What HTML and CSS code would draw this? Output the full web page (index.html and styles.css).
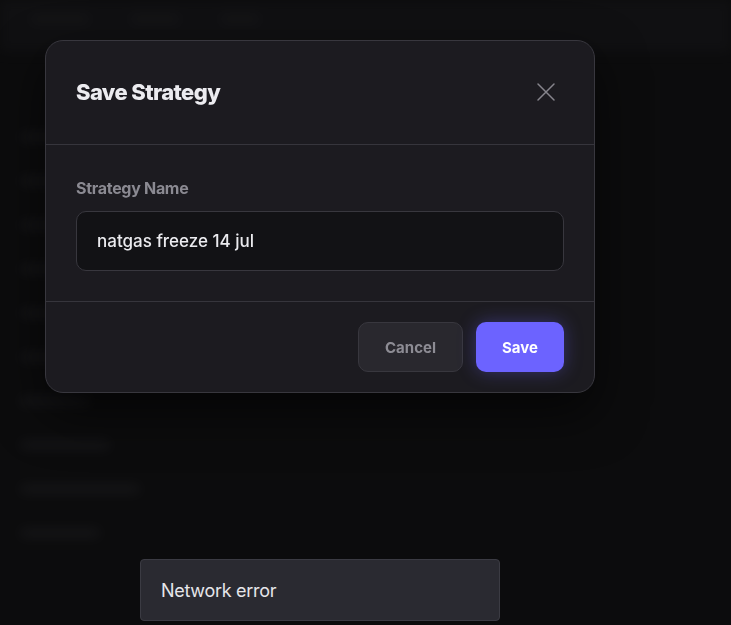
FILE: index.html
```html
<!DOCTYPE html>
<html lang="en">

<head>
  <meta charset="UTF-8">
  <title>Save Strategy</title>
  <link rel="stylesheet" href="styles.css">
</head>

<body>
  <!-- blurred page behind the modal -->
  <main class="page">
    <div class="topbar">
      <span class="blob w60"></span>
      <span class="blob w50"></span>
      <span class="blob w40"></span>
    </div>
    <div class="rows">
      <span class="blob w90"></span>
      <span class="blob w70"></span>
      <span class="blob w120"></span>
      <span class="blob w80"></span>
      <span class="blob w60"></span>
      <span class="blob w100"></span>
      <span class="blob w70"></span>
      <span class="blob w90"></span>
      <span class="blob w120"></span>
      <span class="blob w80"></span>
    </div>
  </main>

  <div class="overlay">
    <section class="modal">
      <header class="modal_head">
        <h2>Save Strategy</h2>
        <button class="close" aria-label="Close">
          <svg width="20" height="20" viewBox="0 0 20 20" fill="none" stroke="currentColor" stroke-width="1.5" stroke-linecap="round">
            <path d="M2 2 L18 18 M18 2 L2 18" />
          </svg>
        </button>
      </header>

      <div class="modal_body">
        <label class="label" for="name">Strategy Name</label>
        <input class="field" id="name" type="text" value="natgas freeze 14 jul">
      </div>

      <footer class="modal_foot">
        <button class="btn cancel">Cancel</button>
        <button class="btn save">Save</button>
      </footer>
    </section>
  </div>

  <div class="toast">Network error</div>
</body>

</html>
```

FILE: styles.css
```css
* {
  box-sizing: border-box;
  margin: 0;
  padding: 0;
}

body {
  background-color: #0c0c0d;
  font-family: Inter, "Noto Sans", sans-serif;
  color: #e8e8ec;
  height: 625px;
  overflow: hidden;
}

/* 뒤쪽 흐린 페이지 */
.page {
  filter: blur(6px);
  opacity: 0.3;
}

.page .topbar {
  display: flex;
  gap: 40px;
  padding: 14px 30px;
  height: 52px;
  background-color: #1a1a1e;
}

.page .rows {
  display: flex;
  flex-direction: column;
  gap: 34px;
  padding: 80px 20px;
}

.blob {
  display: block;
  height: 10px;
  border-radius: 4px;
  background-color: #2a2a2e;
}

.w40 { width: 40px; }
.w50 { width: 50px; }
.w60 { width: 60px; }
.w70 { width: 70px; }
.w80 { width: 80px; }
.w90 { width: 90px; }
.w100 { width: 100px; }
.w120 { width: 120px; }

.overlay {
  position: fixed;
  inset: 0;
  padding: 40px 0 0 45px;
}

.modal {
  width: 550px;
  background-color: #1c1b20;
  border: 1px solid #38373e;
  border-radius: 18px;
  box-shadow: 0 20px 50px rgba(0, 0, 0, 0.6);
}

.modal_head {
  display: flex;
  align-items: center;
  justify-content: space-between;
  height: 104px;
  padding: 0 38px 2px 30px;
  border-bottom: 1px solid #36353c;
}

.modal_head h2 {
  font-size: 22px;
  font-weight: 800;
  letter-spacing: -0.6px;
  color: #ececf0;
}

.close {
  display: flex;
  background: none;
  border: none;
  color: #86858c;
  cursor: pointer;
}

.modal_body {
  display: flex;
  flex-direction: column;
  gap: 13px;
  padding: 33px 30px 30px;
  border-bottom: 1px solid #36353c;
}

.label {
  font-size: 16px;
  font-weight: 700;
  letter-spacing: -0.3px;
  color: #8b8a92;
}

.field {
  height: 60px;
  padding: 0 20px;
  background-color: #121215;
  border: 1px solid #38373e;
  border-radius: 10px;
  font-family: inherit;
  font-size: 17px;
  font-weight: 500;
  color: #ebebef;
  outline: none;
}

.modal_foot {
  display: flex;
  justify-content: flex-end;
  gap: 13px;
  padding: 20px 30px 20px;
}

.btn {
  height: 50px;
  border-radius: 10px;
  font-family: inherit;
  font-size: 15px;
  font-weight: 700;
  cursor: pointer;
}

.cancel {
  width: 105px;
  background-color: #29282e;
  border: 1px solid #38373e;
  color: #8d8c94;
}

.save {
  width: 88px;
  background-color: #6c63ff;
  border: none;
  color: #ffffff;
  box-shadow: 0 0 18px rgba(108, 99, 255, 0.35);
}

.toast {
  position: fixed;
  left: 140px;
  top: 559px;
  width: 360px;
  height: 62px;
  display: flex;
  align-items: center;
  padding: 0 20px;
  background-color: #2a2a31;
  border: 1px solid #3b3b43;
  border-radius: 4px;
  font-size: 18px;
  letter-spacing: -0.3px;
  color: #e6e6ea;
}
```
